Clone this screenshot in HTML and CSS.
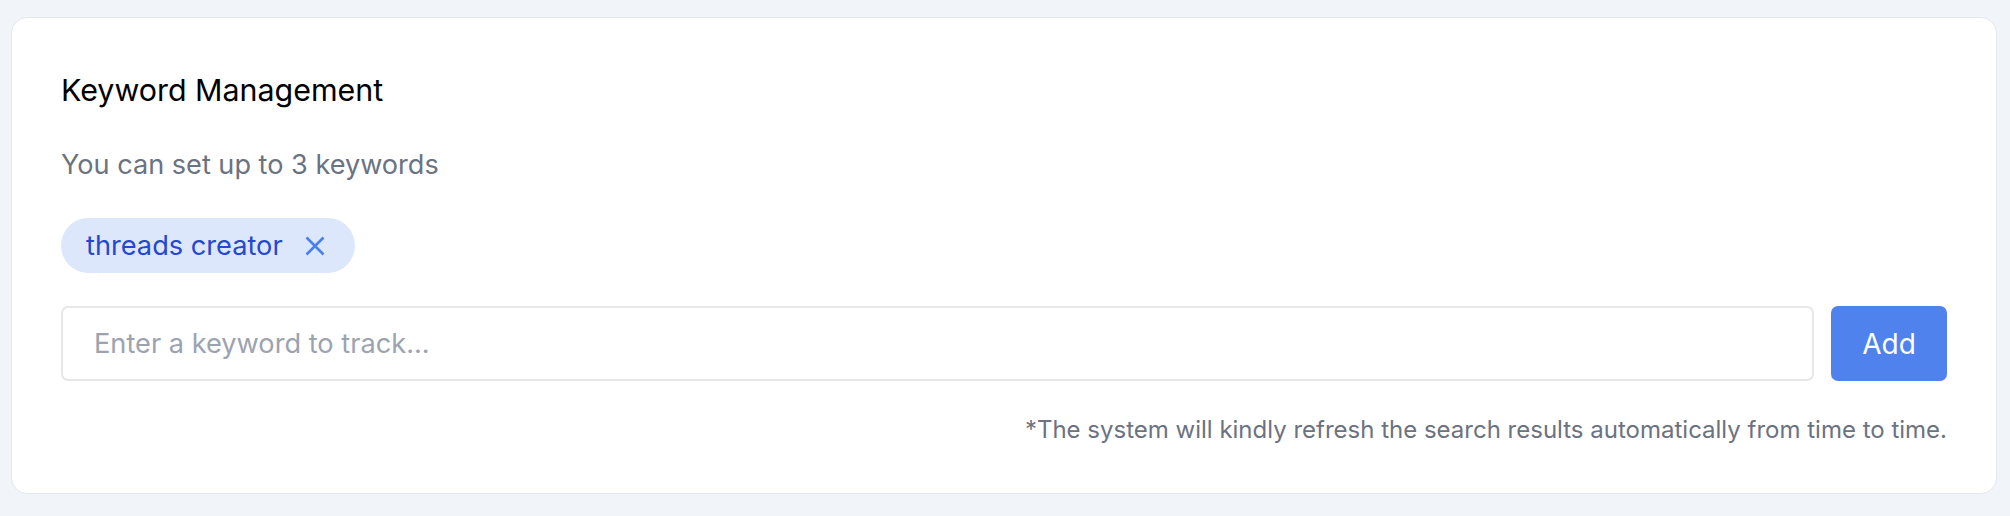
FILE: index.html
```html
<!DOCTYPE html>
<html lang="en">
<head>
<meta charset="utf-8">
<title>Keyword Management</title>
<link rel="stylesheet" href="styles.css">
</head>
<body>
<div class="page">
  <section class="card">
    <h2 class="title">Keyword Management</h2>
    <p class="subtitle">You can set up to 3 keywords</p>
    <div class="tags">
      <span class="tag">threads creator
        <button class="tag-remove" aria-label="Remove">
          <svg viewBox="0 0 20 20" width="20" height="20" fill="none" stroke="currentColor" stroke-width="2.6"><path d="M1.5 1.5L18.5 18.5M18.5 1.5L1.5 18.5"/></svg>
        </button>
      </span>
    </div>
    <div class="add-row">
      <input class="kw-input" type="text" placeholder="Enter a keyword to track...">
      <button class="add-btn">Add</button>
    </div>
    <p class="note">*The system will kindly refresh the search results automatically from time to time.</p>
  </section>
</div>
</body>
</html>
```
FILE: styles.css
```css
* { box-sizing: border-box; }
html, body { margin: 0; padding: 0; }
body {
  background: #f1f4f9;
  font-family: Inter, "Noto Sans", sans-serif;
}
.page {
  padding: 17px 13px 22px 11px;
}
.card {
  background: #fff;
  border: 1px solid #e3e7ec;
  border-radius: 16px;
  padding: 50px 49px 48px 49px;
}
.title {
  margin: 0;
  font-size: 30.4px;
  line-height: 45px;
  font-weight: 400;
  color: #000;
}
.subtitle {
  margin: 31px 0 0;
  font-size: 27.1px;
  line-height: 42px;
  color: #6b7280;
}
.tags {
  margin-top: 32px;
  display: flex;
  gap: 12px;
}
.tag {
  display: inline-flex;
  align-items: center;
  height: 55px;
  padding: 0 30px 0 25px;
  border-radius: 28px;
  background: #dce7fb;
  color: #2547d0;
  font-size: 27.2px;
  gap: 22px;
}
.tag-remove {
  display: flex;
  align-items: center;
  justify-content: center;
  padding: 0;
  border: 0;
  background: none;
  color: #4a80ee;
  width: 20px;
  height: 20px;
}
.add-row {
  margin-top: 33px;
  display: flex;
  gap: 17px;
}
.kw-input {
  flex: 1;
  height: 75px;
  border: 2px solid #e5e7eb;
  border-radius: 7px;
  padding: 0 31px;
  font-family: inherit;
  font-size: 27.2px;
  color: #111;
  background: #fff;
  outline: none;
}
.kw-input::placeholder { color: #9ca3af; }
.add-btn {
  width: 116px;
  height: 75px;
  border: 0;
  border-radius: 7px;
  background: #5082ee;
  color: #fff;
  font-family: inherit;
  font-size: 28px;
}
.note {
  margin: 34px 0 0;
  text-align: right;
  font-size: 24px;
  line-height: 30px;
  color: #6b7280;
}
```
